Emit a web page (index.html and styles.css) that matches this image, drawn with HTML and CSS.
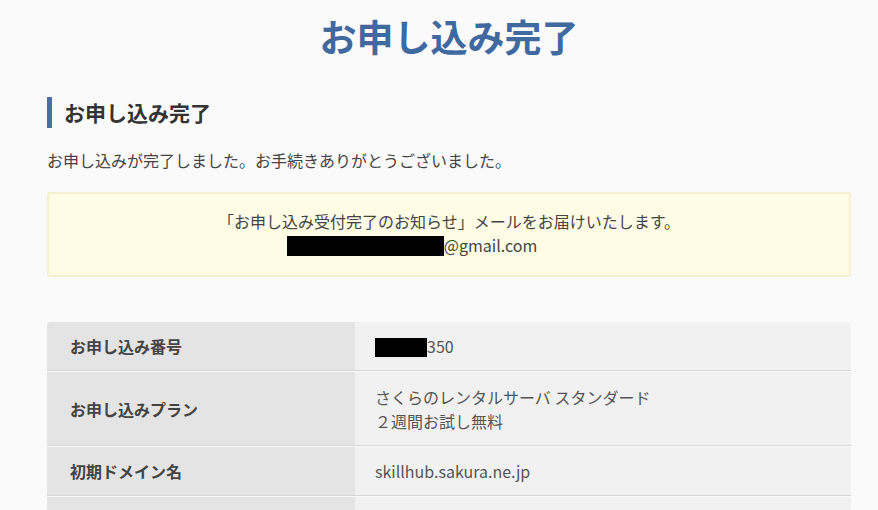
FILE: index.html
```html
<!DOCTYPE html>
<html lang="ja">
<head>
<meta charset="utf-8">
<title>お申し込み完了</title>
<link rel="stylesheet" href="styles.css">
</head>
<body>
<div class="page">
  <h1 class="page-title">お申し込み完了</h1>
  <h2 class="section-title">お申し込み完了</h2>
  <p class="lead">お申し込みが完了しました。お手続きありがとうございました。</p>
  <div class="notice">
    <p class="notice-line">「お申し込み受付完了のお知らせ」メールをお届けいたします。</p>
    <p class="notice-line notice-mail"><span class="redact redact-mail"></span>@gmail.com</p>
  </div>
  <div class="table">
    <div class="row row-short">
      <div class="label">お申し込み番号</div>
      <div class="value"><span><span class="redact redact-num"></span>350</span></div>
    </div>
    <div class="row row-tall">
      <div class="label">お申し込みプラン</div>
      <div class="value"><span>さくらのレンタルサーバ スタンダード<br>２週間お試し無料</span></div>
    </div>
    <div class="row row-short">
      <div class="label">初期ドメイン名</div>
      <div class="value"><span>skillhub.sakura.ne.jp</span></div>
    </div>
    <div class="row row-end">
      <div class="label"></div>
      <div class="value"></div>
    </div>
  </div>
</div>
</body>
</html>
```
FILE: styles.css
```css
html, body {
  margin: 0;
  padding: 0;
  background: #fafafa;
  font-family: "Noto Sans CJK JP", "Noto Sans", sans-serif;
  color: #444;
  overflow: hidden;
}
.page {
  margin: 0 27px 0 47px;
  width: 804px;
}
.page-title {
  margin: 0;
  padding-top: 11px;
  text-align: center;
  font-size: 37px;
  line-height: 50px;
  font-weight: 700;
  color: #40699f;
}
.section-title {
  margin: 36px 0 0;
  padding-left: 12px;
  border-left: 5px solid #4a6fa5;
  font-size: 21px;
  line-height: 31px;
  font-weight: 700;
  color: #333;
}
.lead {
  margin: 21px 0 0;
  font-size: 16px;
  line-height: 22px;
  color: #444;
}
.notice {
  margin-top: 21px;
  background: #fffce6;
  border: 2px solid #f6f0cf;
  border-radius: 3px;
  padding: 15px 0 18px;
  text-align: center;
}
.notice-line {
  margin: 0;
  font-size: 16px;
  line-height: 24px;
  color: #444;
}
.notice-mail {
  padding-right: 74px;
}
.redact {
  display: inline-block;
  background: #000;
  vertical-align: -4px;
}
.redact-mail {
  width: 157px;
  height: 20px;
}
.redact-num {
  width: 52px;
  height: 19px;
}
.table {
  margin-top: 45px;
  border-radius: 4px 4px 0 0;
  overflow: hidden;
}
.row {
  display: flex;
  border-bottom: 1px solid #d6d6d6;
  margin-bottom: 1px;
}
.row-short { height: 48px; }
.row-tall { height: 73px; }
.row-end { height: 13px; border-bottom: 0; margin-bottom: 0; }
.label {
  width: 308px;
  flex: none;
  background: #e4e4e4;
  padding-left: 23px;
  box-sizing: border-box;
  display: flex;
  align-items: center;
  font-size: 16px;
  font-weight: 700;
  color: #444;
}
.value {
  flex: 1;
  background: #f1f1f1;
  padding-left: 20px;
  display: flex;
  align-items: center;
  font-size: 16px;
  line-height: 24px;
  color: #555;
}
```
